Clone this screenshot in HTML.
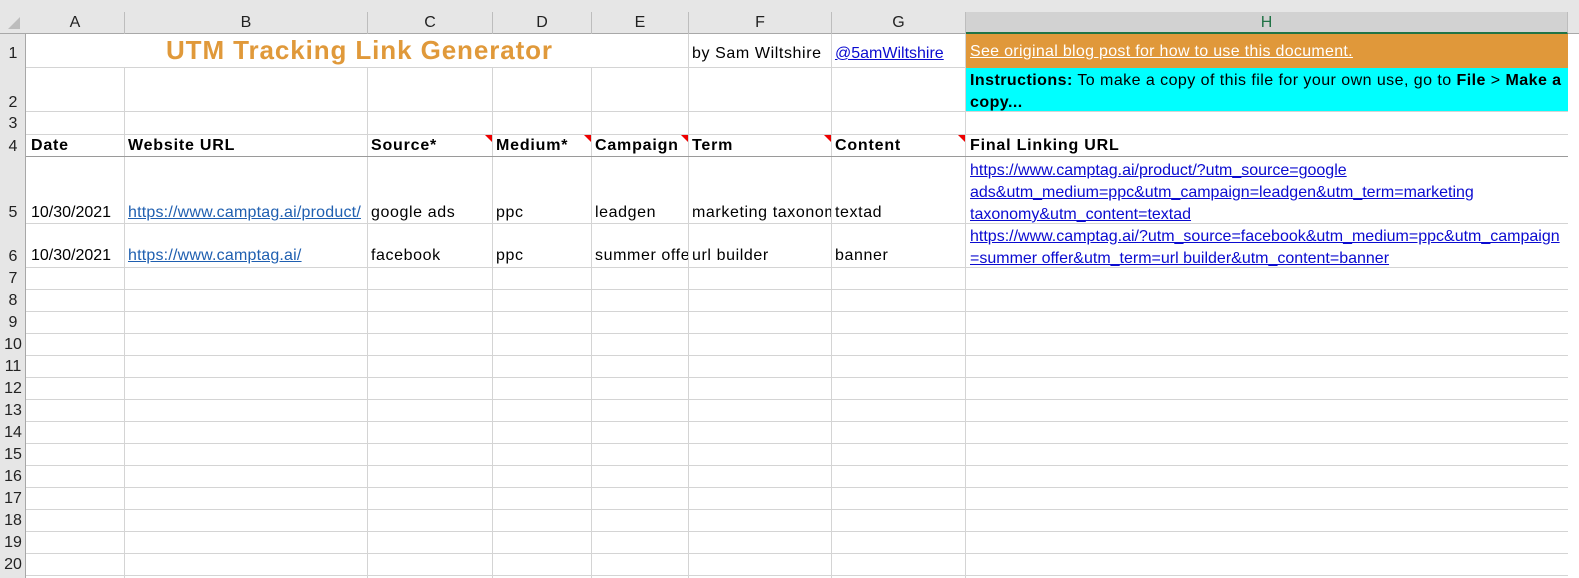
<!DOCTYPE html>
<html><head><meta charset="utf-8"><style>
*{margin:0;padding:0;box-sizing:border-box}
body{width:1579px;height:578px;overflow:hidden;background:#fff;font-family:"Liberation Sans",Arial,sans-serif;font-size:16px;color:#000;position:relative}
.a{position:absolute;white-space:nowrap}
.t{letter-spacing:0.6px}
.b{font-weight:bold;letter-spacing:0.8px}
.v{position:absolute;width:1px;background:#d4d4d4}
.r{position:absolute;height:1px;background:#d4d4d4}
.ch{position:absolute;top:12px;height:22px;text-align:center;line-height:22px;color:#222;font-size:16px;border-right:1px solid #bdbdbd}
.rn{position:absolute;left:0;width:26px;text-align:center;font-size:16px;color:#222}
.lk{color:#0b0bd0;text-decoration:underline}
.lk2{color:#1f5fb0;text-decoration:underline}
.tri{position:absolute;width:0;height:0;border-top:7px solid #e00;border-left:7px solid transparent}
</style></head><body>
<div class="a" style="left:0;top:0;width:1579px;height:12px;background:#e6e6e6"></div>
<div class="a" style="left:0;top:12px;width:1579px;height:22px;background:#e6e6e6;border-bottom:1px solid #a8a8a8"></div>
<div class="a" style="left:0;top:34px;width:26px;height:544px;background:#e6e6e6;border-right:1px solid #a8a8a8"></div>
<div class="a" style="left:8px;top:17px;width:0;height:0;border-bottom:12px solid #bdbdbd;border-left:12px solid transparent"></div>
<div class="ch" style="left:26px;width:99px">A</div>
<div class="ch" style="left:125px;width:243px">B</div>
<div class="ch" style="left:368px;width:125px">C</div>
<div class="ch" style="left:493px;width:99px">D</div>
<div class="ch" style="left:592px;width:97px">E</div>
<div class="ch" style="left:689px;width:143px">F</div>
<div class="ch" style="left:832px;width:134px">G</div>
<div class="ch" style="left:966px;width:602px;background:#d2d2d2;color:#217346;border-bottom:2px solid #217346;height:22px">H</div>
<div class="rn" style="top:34px;height:34px;line-height:40px">1</div>
<div class="rn" style="top:68px;height:44px;line-height:70px">2</div>
<div class="rn" style="top:112px;height:23px;line-height:24px">3</div>
<div class="rn" style="top:135px;height:22px;line-height:24px">4</div>
<div class="rn" style="top:157px;height:67px;line-height:112px">5</div>
<div class="rn" style="top:224px;height:44px;line-height:66px">6</div>
<div class="rn" style="top:268px;line-height:22px">7</div>
<div class="rn" style="top:290px;line-height:22px">8</div>
<div class="rn" style="top:312px;line-height:22px">9</div>
<div class="rn" style="top:334px;line-height:22px">10</div>
<div class="rn" style="top:356px;line-height:22px">11</div>
<div class="rn" style="top:378px;line-height:22px">12</div>
<div class="rn" style="top:400px;line-height:22px">13</div>
<div class="rn" style="top:422px;line-height:22px">14</div>
<div class="rn" style="top:444px;line-height:22px">15</div>
<div class="rn" style="top:466px;line-height:22px">16</div>
<div class="rn" style="top:488px;line-height:22px">17</div>
<div class="rn" style="top:510px;line-height:22px">18</div>
<div class="rn" style="top:532px;line-height:22px">19</div>
<div class="rn" style="top:554px;line-height:22px">20</div>
<div class="a" style="left:966px;top:34px;width:602px;height:34px;background:#e0983a"></div>
<div class="a" style="left:966px;top:68px;width:602px;height:44px;background:#00ffff"></div>
<div class="v" style="left:124px;top:68px;height:510px"></div>
<div class="v" style="left:367px;top:68px;height:510px"></div>
<div class="v" style="left:492px;top:68px;height:510px"></div>
<div class="v" style="left:591px;top:68px;height:510px"></div>
<div class="v" style="left:688px;top:68px;height:510px"></div>
<div class="v" style="left:831px;top:34px;height:544px"></div>
<div class="v" style="left:965px;top:34px;height:544px"></div>
<div class="v" style="left:688px;top:34px;height:34px"></div>
<div class="r" style="left:26px;top:67px;width:940px"></div>
<div class="r" style="left:26px;top:111px;width:1542px"></div>
<div class="r" style="left:26px;top:134px;width:1542px"></div>
<div class="r" style="left:26px;top:156px;width:1542px;background:#9a9a9a"></div>
<div class="r" style="left:26px;top:223px;width:1542px"></div>
<div class="r" style="left:26px;top:267px;width:1542px"></div>
<div class="r" style="left:26px;top:289px;width:1542px"></div>
<div class="r" style="left:26px;top:311px;width:1542px"></div>
<div class="r" style="left:26px;top:333px;width:1542px"></div>
<div class="r" style="left:26px;top:355px;width:1542px"></div>
<div class="r" style="left:26px;top:377px;width:1542px"></div>
<div class="r" style="left:26px;top:399px;width:1542px"></div>
<div class="r" style="left:26px;top:421px;width:1542px"></div>
<div class="r" style="left:26px;top:443px;width:1542px"></div>
<div class="r" style="left:26px;top:465px;width:1542px"></div>
<div class="r" style="left:26px;top:487px;width:1542px"></div>
<div class="r" style="left:26px;top:509px;width:1542px"></div>
<div class="r" style="left:26px;top:531px;width:1542px"></div>
<div class="r" style="left:26px;top:553px;width:1542px"></div>
<div class="r" style="left:26px;top:575px;width:1542px"></div>
<div class="a" style="left:166px;top:35px;font-size:26px;font-weight:bold;color:#e0993a;letter-spacing:0.9px">UTM Tracking Link Generator</div>
<div class="a t" style="left:692px;top:45px">by Sam Wiltshire</div>
<div class="a lk" style="left:835px;top:45px">@5amWiltshire</div>
<div class="a t" style="left:970px;top:43px;color:#fff;text-decoration:underline;letter-spacing:0.3px">See original blog post for how to use this document.</div>
<div class="a" style="left:970px;top:70px;line-height:22px;letter-spacing:0.45px"><b>Instructions:</b> To make a copy of this file for your own use, go to <b>File</b> &gt; <b>Make a</b><br><b>copy...</b></div>
<div class="a b" style="left:31px;top:137px">Date</div>
<div class="a b" style="left:128px;top:137px">Website URL</div>
<div class="a b" style="left:371px;top:137px">Source*</div>
<div class="a b" style="left:496px;top:137px">Medium*</div>
<div class="a b" style="left:595px;top:137px">Campaign</div>
<div class="a b" style="left:692px;top:137px">Term</div>
<div class="a b" style="left:835px;top:137px">Content</div>
<div class="a b" style="left:970px;top:137px">Final Linking URL</div>
<div class="tri" style="left:485px;top:135px"></div>
<div class="tri" style="left:584px;top:135px"></div>
<div class="tri" style="left:681px;top:135px"></div>
<div class="tri" style="left:824px;top:135px"></div>
<div class="tri" style="left:958px;top:135px"></div>
<div class="a" style="left:31px;top:204px">10/30/2021</div>
<div class="a lk2" style="left:128px;top:204px;letter-spacing:0.2px">https://www.camptag.ai/product/</div>
<div class="a t" style="left:371px;top:204px">google ads</div>
<div class="a t" style="left:496px;top:204px">ppc</div>
<div class="a t" style="left:595px;top:204px">leadgen</div>
<div class="a t" style="left:692px;top:204px;width:139px;overflow:hidden">marketing taxonomy</div>
<div class="a t" style="left:835px;top:204px">textad</div>
<div class="a lk" style="left:970px;top:160px;line-height:22px">https://www.camptag.ai/product/?utm_source=google <br>ads&amp;utm_medium=ppc&amp;utm_campaign=leadgen&amp;utm_term=marketing <br>taxonomy&amp;utm_content=textad</div>
<div class="a" style="left:31px;top:247px">10/30/2021</div>
<div class="a lk2" style="left:128px;top:247px;letter-spacing:0.2px">https://www.camptag.ai/</div>
<div class="a t" style="left:371px;top:247px">facebook</div>
<div class="a t" style="left:496px;top:247px">ppc</div>
<div class="a t" style="left:595px;top:247px;width:93px;overflow:hidden">summer offer</div>
<div class="a t" style="left:692px;top:247px">url builder</div>
<div class="a t" style="left:835px;top:247px">banner</div>
<div class="a lk" style="left:970px;top:226px;line-height:22px">https://www.camptag.ai/?utm_source=facebook&amp;utm_medium=ppc&amp;utm_campaign<br>=summer offer&amp;utm_term=url builder&amp;utm_content=banner</div>
</body></html>
